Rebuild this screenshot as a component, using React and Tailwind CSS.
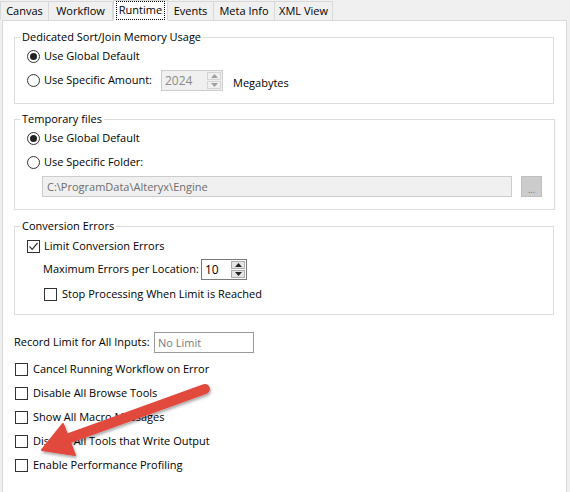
import React from 'react';

const tabs = [
  ['Canvas', 'w-[49px]'],
  ['Workflow', 'w-[65px]'],
  ['Runtime', 'w-[55px]'],
  ['Events', 'w-[47px]'],
  ['Meta Info', 'w-[62px]'],
  ['XML View', 'w-[59px]'],
];

function Radio({ checked }) {
  return (
    <span className="w-[13px] h-[13px] rounded-full border border-[#333] bg-white flex items-center justify-center shrink-0">
      {checked && <span className="w-[7px] h-[7px] rounded-full bg-[#222]" />}
    </span>
  );
}

function Check({ checked }) {
  return (
    <span className="w-[13px] h-[13px] border border-[#333] bg-white flex items-center justify-center shrink-0">
      {checked && (
        <svg width="11" height="11" viewBox="0 0 11 11">
          <path d="M1.5 5.5 L4.2 8.3 L9.5 2" fill="none" stroke="#333" strokeWidth="1.2" />
        </svg>
      )}
    </span>
  );
}

function Spin({ value, disabled, className }) {
  return (
    <div className={`h-[21px] flex border ${disabled ? 'border-[#cccccc] bg-[#f0f0f0]' : 'border-[#7a7a7a] bg-white'} ${className}`}>
      <span className={`flex-1 pl-[3px] leading-[19px] text-[12px] ${disabled ? 'text-[#8a8a8a]' : 'text-black'}`}>{value}</span>
      <div className="w-[15px] flex flex-col justify-center gap-[1px] pr-[1px]">
        <div className={`h-[8px] border ${disabled ? 'border-[#d4d4d4]' : 'border-[#adadad] bg-[#e5e5e5]'} flex items-center justify-center`}>
          <svg width="7" height="4" viewBox="0 0 7 4"><path d="M0 4 L3.5 0 L7 4 Z" fill={disabled ? '#a0a0a0' : '#222'} /></svg>
        </div>
        <div className={`h-[8px] border ${disabled ? 'border-[#d4d4d4]' : 'border-[#adadad] bg-[#e5e5e5]'} flex items-center justify-center`}>
          <svg width="7" height="4" viewBox="0 0 7 4"><path d="M0 0 L3.5 4 L7 0 Z" fill={disabled ? '#a0a0a0' : '#222'} /></svg>
        </div>
      </div>
    </div>
  );
}

function Group({ title, children, className }) {
  return (
    <fieldset className={`border border-[#dcdcdc] px-[12px] ${className}`}>
      <legend className="-ml-[7px] px-[2px] leading-[16px]">{title}</legend>
      {children}
    </fieldset>
  );
}

export default function App() {
  return (
    <div className="w-[570px] h-[492px] bg-[#f0f0f0] relative overflow-hidden text-[11px] text-black whitespace-nowrap" style={{ fontFamily: '"Open Sans", "Liberation Sans", sans-serif' }}>
      {/* tab strip */}
      <div className="h-[20px] flex items-end">
        {tabs.map(([t, w]) => (
          t === 'Runtime' ? (
            <div key={t} className={`${w} h-[21px] -mb-[1px] z-10 bg-white border border-[#d9d9d9] border-b-white flex justify-center pt-[1px]`}>
              <span className="block h-[17px] px-[2px] leading-[16px] outline-1 outline-dotted outline-black">{t}</span>
            </div>
          ) : (
            <div key={t} className={`${w} h-[19px] bg-[#f0f0f0] border border-[#d9d9d9] border-b-0 -ml-[1px] first:ml-0 text-center leading-[17px]`}>
              {t}
            </div>
          )
        ))}
      </div>

      {/* panel */}
      <div className="ml-[2px] w-[565px] h-[480px] bg-white border border-[#d9d9d9] pl-[11px] pr-[12px] pt-[8px]">
        <Group title="Dedicated Sort/Join Memory Usage" className="pb-[12px]">
          <div className="h-[20px] mt-[1px] flex items-center gap-[4px]">
            <Radio checked />
            <span>Use Global Default</span>
          </div>
          <div className="h-[21px] mt-[4px] flex items-center">
            <Radio />
            <span className="ml-[4px] w-[117px]">Use Specific Amount:</span>
            <Spin value="2024" disabled className="w-[62px]" />
            <span className="ml-[10px] mt-[5px]">Megabytes</span>
          </div>
        </Group>

        <Group title="Temporary files" className="mt-[7px] pb-[12px]">
          <div className="h-[20px] mt-[1px] flex items-center gap-[4px]">
            <Radio checked />
            <span>Use Global Default</span>
          </div>
          <div className="h-[20px] mt-[4px] flex items-center gap-[4px]">
            <Radio />
            <span>Use Specific Folder:</span>
          </div>
          <div className="mt-[4px] flex items-center">
            <div className="ml-[15px] w-[470px] h-[21px] bg-[#f0f0f0] border border-[#cccccc] pl-[4px] leading-[19px] text-[#6d6d6d]">
              C:\ProgramData\Alteryx\Engine
            </div>
            <div className="ml-[9px] w-[21px] h-[21px] bg-[#cccccc] border border-[#bfbfbf] flex items-end justify-center text-[9px] leading-[12px] text-[#6d6d6d]">...</div>
          </div>
        </Group>

        <Group title="Conversion Errors" className="mt-[8px] pb-[10px]">
          <div className="h-[20px] mt-[2px] flex items-center gap-[4px]">
            <Check checked />
            <span>Limit Conversion Errors</span>
          </div>
          <div className="h-[21px] mt-[3px] pl-[16px] flex items-center">
            <span className="w-[158px]">Maximum Errors per Location:</span>
            <Spin value="10" className="w-[46px]" />
          </div>
          <div className="h-[20px] mt-[4px] pl-[17px] flex items-center gap-[5px]">
            <Check />
            <span>Stop Processing When Limit is Reached</span>
          </div>
        </Group>

        <div className="mt-[17px] h-[21px] flex items-center">
          <span className="w-[140px]">Record Limit for All Inputs:</span>
          <div className="w-[100px] h-[21px] border border-[#9a9a9a] pl-[3px] leading-[19px] text-[#7a7a7a]">No Limit</div>
        </div>

        <div className="mt-[4px] flex flex-col">
          {[
            'Cancel Running Workflow on Error',
            'Disable All Browse Tools',
            'Show All Macro Messages',
            'Disable All Tools that Write Output',
            'Enable Performance Profiling',
          ].map((l) => (
            <div key={l} className="h-[24px] flex items-center gap-[5px] pl-[1px]">
              <Check />
              <span>{l}</span>
            </div>
          ))}
        </div>
      </div>

      {/* red annotation arrow */}
      <svg className="absolute left-0 top-0 pointer-events-none" width="570" height="492" viewBox="0 0 570 492">
        <defs>
          <filter id="sh" x="-20%" y="-20%" width="140%" height="140%">
            <feDropShadow dx="1" dy="2" stdDeviation="1.5" floodColor="#000" floodOpacity="0.35" />
          </filter>
        </defs>
        <g filter="url(#sh)" fill="#e2483e" stroke="#e2483e">
          <line x1="205" y1="389" x2="64" y2="440" strokeWidth="10" strokeLinecap="round" />
          <polygon points="42,450 63,424 75,455" strokeWidth="2" strokeLinejoin="round" />
        </g>
      </svg>
    </div>
  );
}
